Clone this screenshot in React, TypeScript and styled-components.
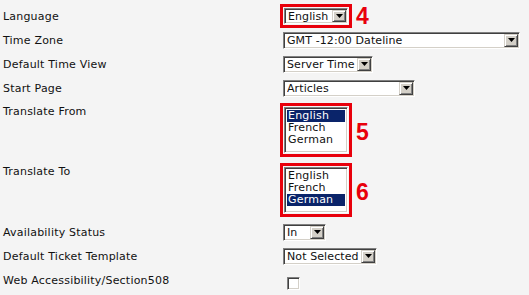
import React from 'react';
import styled, { createGlobalStyle } from 'styled-components';

const Global = createGlobalStyle`
  html, body { margin: 0; padding: 0; background: #f4f4f4; }
  body {
    font-family: "DejaVu Sans", Verdana, sans-serif;
    font-size: 11px;
    letter-spacing: 0.2px;
    color: #111;
  }
`;

const Form = styled.div`
  display: flex;
  flex-direction: column;
  padding: 4px 0 0 3px;
`;

const Row = styled.div<{ $h: number; $top?: boolean }>`
  display: flex;
  height: ${p => p.$h}px;
  align-items: ${p => (p.$top ? 'flex-start' : 'center')};
`;

const Label = styled.div<{ $pt?: number }>`
  width: 277px;
  flex: none;
  line-height: 13px;
  padding-top: ${p => p.$pt ?? 0}px;
  white-space: nowrap;
`;

const Cell = styled.div<{ $pl?: number; $pt?: number }>`
  display: flex;
  align-items: flex-start;
  padding-left: ${p => p.$pl ?? 3}px;
  padding-top: ${p => p.$pt ?? 0}px;
`;

const SingleCell = styled(Cell)`
  align-items: center;
`;

const Highlight = styled.div`
  border: 3px solid #e8000b;
  padding: 1px;
  display: flex;
`;

const Marker = styled.span<{ $mt?: number }>`
  font-family: "Liberation Sans", Arial, sans-serif;
  font-weight: bold;
  font-size: 23px;
  line-height: 22px;
  letter-spacing: 0;
  color: #e8000b;
  margin-left: 4px;
  margin-top: ${p => p.$mt ?? 0}px;
`;

const SelectBox = styled.div<{ $w: number; $h?: number }>`
  box-sizing: border-box;
  width: ${p => p.$w}px;
  height: ${p => p.$h ?? 17}px;
  display: flex;
  align-items: center;
  background: #fff;
  border-style: solid;
  border-width: 1px;
  border-color: #808080 #fff #fff #808080;
  box-shadow: inset 1px 1px 0 #404040, inset -1px -1px 0 #d4d0c8;
  padding: 1px 1px 1px 3px;
`;

const SelectText = styled.span`
  flex: 1;
  line-height: 13px;
  letter-spacing: 0.1px;
  white-space: nowrap;
  overflow: hidden;
`;

const ArrowButton = styled.span`
  box-sizing: border-box;
  width: 14px;
  height: 100%;
  flex: none;
  display: flex;
  align-items: center;
  justify-content: center;
  background: #d4d0c8;
  border-style: solid;
  border-width: 1px;
  border-color: #d4d0c8 #404040 #404040 #d4d0c8;
  box-shadow: inset 1px 1px 0 #fff, inset -1px -1px 0 #808080;
`;

const Arrow = () => (
  <svg width="7" height="4" viewBox="0 0 7 4">
    <path d="M0 0h7L3.5 4z" fill="#000" />
  </svg>
);

const Select: React.FC<{ w: number; h?: number; value: string }> = ({ w, h, value }) => (
  <SelectBox $w={w} $h={h}>
    <SelectText>{value}</SelectText>
    <ArrowButton>
      <Arrow />
    </ArrowButton>
  </SelectBox>
);

const ListBox = styled.div`
  box-sizing: border-box;
  width: 64px;
  height: 46px;
  background: #fff;
  border-style: solid;
  border-width: 1px;
  border-color: #808080 #fff #fff #808080;
  box-shadow: inset 1px 1px 0 #404040, inset -1px -1px 0 #d4d0c8;
  padding: 2px 2px;
  display: flex;
  flex-direction: column;
`;

const Option = styled.div<{ $sel?: boolean }>`
  line-height: 12px;
  height: 12px;
  padding-left: 1px;
  background: ${p => (p.$sel ? '#0a246a' : 'transparent')};
  color: ${p => (p.$sel ? '#fff' : '#111')};
`;

const CheckBox = styled.div`
  box-sizing: border-box;
  width: 13px;
  height: 13px;
  margin: 9px 0 0 4px;
  background: #fff;
  border-style: solid;
  border-width: 1px;
  border-color: #808080 #fff #fff #808080;
  box-shadow: inset 1px 1px 0 #404040, inset -1px -1px 0 #d4d0c8;
`;

const languages = ['English', 'French', 'German'];

const Languages: React.FC<{ selected: string }> = ({ selected }) => (
  <ListBox>
    {languages.map(l => (
      <Option key={l} $sel={l === selected}>
        {l}
      </Option>
    ))}
  </ListBox>
);

export default function App() {
  return (
    <>
      <Global />
      <Form>
        <Row $h={24}>
          <Label>Language</Label>
          <SingleCell $pl={0}>
            <Highlight>
              <Select w={64} h={16} value="English" />
            </Highlight>
            <Marker>4</Marker>
          </SingleCell>
        </Row>
        <Row $h={24}>
          <Label>Time Zone</Label>
          <SingleCell>
            <Select w={237} value="GMT -12:00 Dateline" />
          </SingleCell>
        </Row>
        <Row $h={24}>
          <Label>Default Time View</Label>
          <SingleCell>
            <Select w={90} value="Server Time" />
          </SingleCell>
        </Row>
        <Row $h={24}>
          <Label>Start Page</Label>
          <SingleCell>
            <Select w={132} value="Articles" />
          </SingleCell>
        </Row>
        <Row $h={60} $top>
          <Label $pt={5}>Translate From</Label>
          <Cell $pl={0} $pt={3}>
            <Highlight>
              <Languages selected="English" />
            </Highlight>
            <Marker $mt={18}>5</Marker>
          </Cell>
        </Row>
        <Row $h={60} $top>
          <Label $pt={5}>Translate To</Label>
          <Cell $pl={0} $pt={3}>
            <Highlight>
              <Languages selected="German" />
            </Highlight>
            <Marker $mt={18}>6</Marker>
          </Cell>
        </Row>
        <Row $h={24}>
          <Label>Availability Status</Label>
          <SingleCell>
            <Select w={43} value="In" />
          </SingleCell>
        </Row>
        <Row $h={24}>
          <Label>Default Ticket Template</Label>
          <SingleCell>
            <Select w={94} value="Not Selected" />
          </SingleCell>
        </Row>
        <Row $h={24} $top>
          <Label $pt={6}>Web Accessibility/Section508</Label>
          <Cell>
            <CheckBox />
          </Cell>
        </Row>
      </Form>
    </>
  );
}
